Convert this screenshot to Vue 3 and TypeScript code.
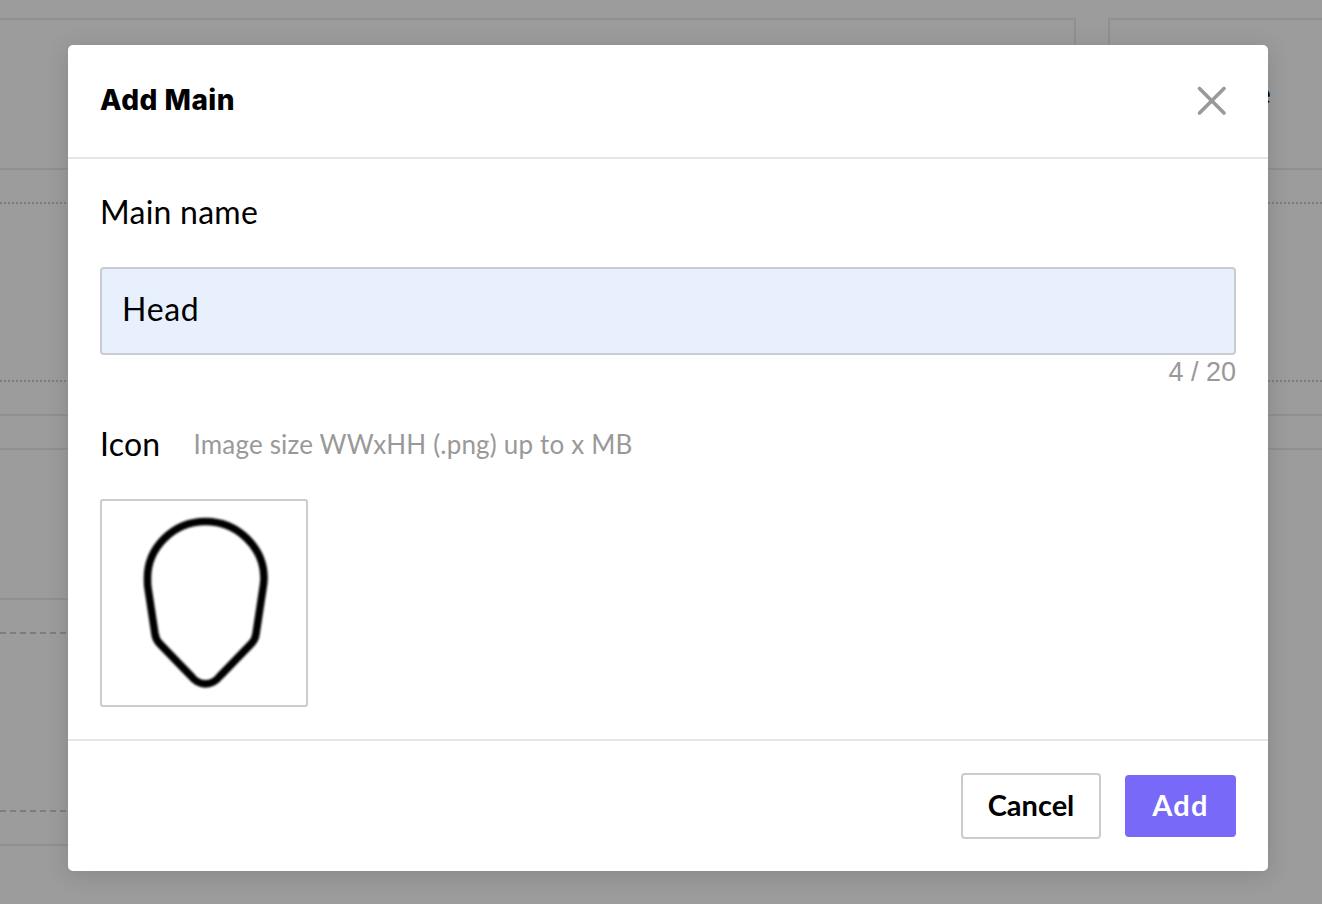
<script setup lang="ts">
const title = 'Add Main'
</script>

<template>
  <div class="page">
    <div class="top">
      <div class="card-left"></div>
      <div class="card-right"><span class="peek">Name</span></div>
    </div>
    <div class="dotted"></div>
    <div class="strip"></div>
    <div class="lower">
      <div class="dashed"></div>
    </div>
    <div class="overlay">
      <div class="modal">
        <header class="head">
          <h2 class="title">{{ title }}</h2>
          <svg class="close" width="32" height="32" viewBox="0 0 32 32" fill="none" stroke="#999" stroke-width="3.6" stroke-linecap="round">
            <path d="M3.5 3.5 28 28M28 3.5 3.5 28" />
          </svg>
        </header>
        <section class="body">
          <label class="label">Main name</label>
          <input class="field" value="Head" />
          <div class="count">4 / 20</div>
          <div class="icon-row">
            <span class="label">Icon</span>
            <span class="hint">Image size WWxHH (.png) up to x MB</span>
          </div>
          <div class="icon-box">
            <svg class="head-icon" width="204" height="204" viewBox="0 0 204 204" fill="none" stroke="#000" stroke-width="7.6">
              <path d="M103.5 20.5C136 20.5 162 47 162 77C162 80 161.5 84 161 87L154 133C153.5 137 152 140 149 143L118 175C110 185.5 97 185.5 89 175L58 143C55 140 53.5 137 53 133L46 87C45.5 84 45.5 80 45.5 77C45.5 47 71 20.5 103.5 20.5Z" />
            </svg>
          </div>
        </section>
        <footer class="foot">
          <button class="btn cancel">Cancel</button>
          <button class="btn add">Add</button>
        </footer>
      </div>
    </div>
  </div>
</template>

<style>
html, body { margin: 0; background: #fff; }
</style>

<style scoped>
.page {
  position: relative;
  height: 904px;
  overflow: hidden;
  background: #fff;
  font-family: Lato, sans-serif;
}
.top {
  display: flex;
  gap: 32px;
  height: 150px;
  padding-top: 18px;
  border-bottom: 2px solid #ebebeb;
}
.card-left {
  width: 1076px;
  box-sizing: border-box;
  border-top: 2px solid #ebebeb;
  border-right: 2px solid #ebebeb;
}
.card-right {
  flex: 1;
  border-top: 2px solid #ebebeb;
  border-left: 2px solid #ebebeb;
  padding: 56px 0 0 88px;
  font-size: 28px;
  color: #000;
}
.dotted {
  height: 176px;
  margin-top: 32px;
  border-top: 2px dotted #ccc;
  border-bottom: 2px dotted #ccc;
}
.strip {
  height: 32px;
  margin-top: 32px;
  border-top: 2px solid #ebebeb;
  border-bottom: 2px solid #ebebeb;
}
.lower {
  width: 1076px;
  height: 248px;
  margin-top: 148px;
  border-top: 2px solid #ebebeb;
  border-bottom: 2px solid #ebebeb;
  box-sizing: border-box;
  padding-top: 32px;
}
.dashed {
  height: 176px;
  border-top: 2px dashed #ccc;
  border-bottom: 2px dashed #ccc;
}
.overlay {
  position: absolute;
  inset: 0;
  background: rgba(0, 0, 0, 0.39);
}
.modal {
  position: absolute;
  left: 68px;
  top: 45px;
  width: 1200px;
  height: 826px;
  display: flex;
  flex-direction: column;
  background: #fff;
  border-radius: 5px;
  box-shadow: 0 4px 24px rgba(0, 0, 0, 0.14);
  color: #000;
}
.head {
  height: 112px;
  flex: none;
  display: flex;
  align-items: center;
  justify-content: space-between;
  padding: 0 40px 0 32px;
  border-bottom: 2px solid #e6e6e6;
}
.title {
  margin: 0 0 2px;
  font: 800 28px Inter, sans-serif;
  letter-spacing: 0.5px;
  color: #000;
}
.body {
  flex: 1;
  padding: 33px 32px 0;
  display: flex;
  flex-direction: column;
  align-items: flex-start;
}
.label {
  font-size: 32px;
  line-height: 40px;
  letter-spacing: 0.25px;
  color: #000;
}
.field {
  width: 100%;
  height: 88px;
  margin-top: 35px;
  box-sizing: border-box;
  border: 2px solid #c9ccd1;
  border-radius: 4px;
  background: #e8f0fe;
  padding: 0 20px 6px;
  font: 32px Lato, sans-serif;
  letter-spacing: 0.7px;
  color: #000;
  outline: none;
}
.count {
  align-self: flex-end;
  margin-top: 1px;
  font: 27px/32px "Liberation Sans", sans-serif;
  color: #999;
}
.icon-row {
  display: flex;
  align-items: center;
  gap: 33px;
  margin-top: 36px;
}
.hint {
  font-size: 26px;
  letter-spacing: 0.18px;
  color: #999;
}
.icon-box {
  width: 208px;
  height: 208px;
  margin-top: 35px;
  box-sizing: border-box;
  border: 2px solid #ccc;
  border-radius: 3px;
}
.head-icon {
  display: block;
  filter: blur(1px);
}
.foot {
  height: 132px;
  flex: none;
  box-sizing: border-box;
  border-top: 2px solid #e6e6e6;
  display: flex;
  align-items: center;
  justify-content: flex-end;
  gap: 24px;
  padding: 0 32px;
}
.btn {
  font: 700 29px Lato, sans-serif;
  border-radius: 4px;
  padding: 0 0 4px;
}
.cancel {
  width: 140px;
  height: 66px;
  background: #fff;
  border: 2px solid #ccc;
  color: #000;
}
.add {
  width: 111px;
  height: 62px;
  background: #7869f9;
  border: none;
  letter-spacing: 1.3px;
  color: #fff;
}
</style>
